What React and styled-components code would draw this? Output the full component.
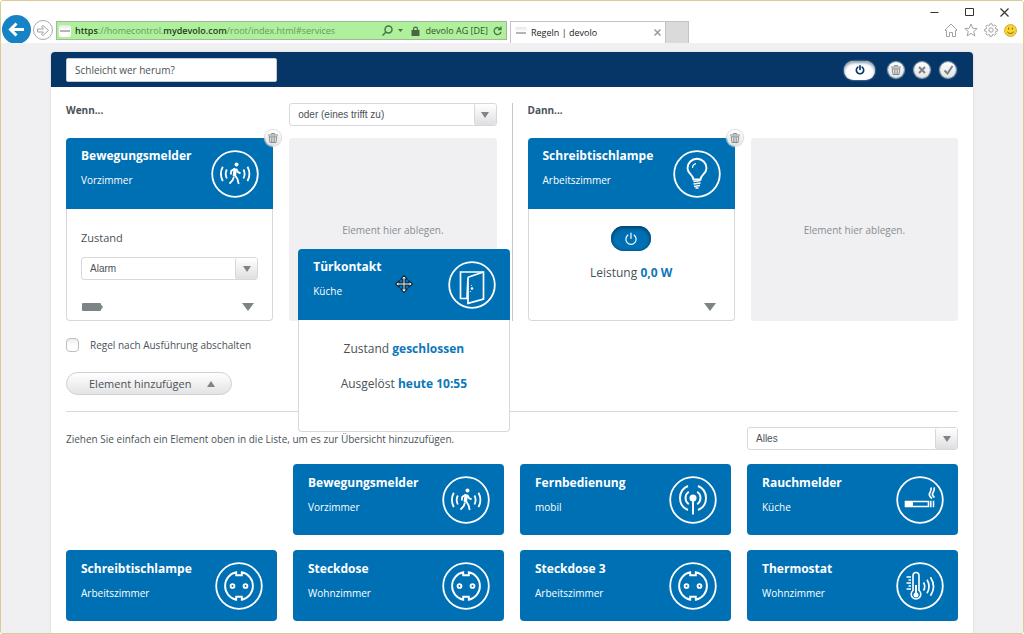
import React from "react";
import styled, { createGlobalStyle, css } from "styled-components";

const color = {
  blue: "#0070b4",
  link: "#0d77ba",
  navy: "#053667",
  text: "#4a5258",
  grey: "#7d8488",
  line: "#d8d8da",
  wash: "#f0f0f2",
  frame: "#d9cc94",
};

const GlobalStyle = createGlobalStyle`
  * { box-sizing: border-box; }
  body {
    margin: 0;
    background: #fff;
    color: ${color.text};
    font: 10px/18px "Open Sans", "Noto Sans", sans-serif;
  }
  button, input, select { font: inherit; color: inherit; margin: 0; padding: 0; }
  h1, h2, h3, p { margin: 0; font: inherit; }
  svg { display: block; flex: none; }
`;

/* ---------- browser frame ---------- */

const Window = styled.div`
  display: flex;
  flex-direction: column;
  min-height: 100vh;
  border: 1px solid ${color.frame};
  border-radius: 3px;
  overflow: hidden;
`;

const Chrome = styled.header`
  display: flex;
  justify-content: space-between;
  height: 42px;
  overflow: hidden;
  background: #fff;
`;

const NavRow = styled.div`
  display: flex;
  flex: 0 1 688px;
  align-items: flex-start;
  min-width: 0;
  padding-left: 1px;
`;

const BackButton = styled.button`
  display: grid;
  place-items: center;
  flex: none;
  width: 29px;
  height: 29px;
  margin-top: 14px;
  border: 0;
  border-radius: 50%;
  background: #1583c5;
`;

const ForwardButton = styled.button`
  display: grid;
  place-items: center;
  flex: none;
  width: 20px;
  height: 20px;
  margin: 19px 3px 0 2px;
  border: 1px solid #a9a9a9;
  border-radius: 50%;
  background: #fff;
`;

const AddressBar = styled.div`
  display: flex;
  flex: 1 1 451px;
  align-items: center;
  min-width: 0;
  height: 19px;
  margin-top: 20px;
  padding: 0 4px 0 2px;
  border: 1px solid #a0b79a;
  background: #aef09b;
  color: #33502c;
  font-size: 9px;
  white-space: nowrap;
`;

const Favicon = styled.span`
  display: grid;
  place-items: center;
  flex: none;
  width: 12px;
  height: 12px;
  margin-right: 4px;
  border-radius: 2px;
  background: linear-gradient(#e4e4e4, #fff 40%);
  &::after {
    content: "";
    width: 10px;
    height: 2px;
    background: #b5b5b5;
  }
`;

const Url = styled.span`
  flex: 1;
  overflow: hidden;
  color: #6b9761;
  b { color: #26391f; font-weight: 600; }
`;

const AddressTools = styled.span`
  display: flex;
  align-items: center;
  gap: 5px;
`;

const Tab = styled.div`
  display: flex;
  flex: 0 1 156px;
  align-items: center;
  height: 22px;
  margin: 20px 0 0 3px;
  padding: 0 4px;
  border: 1px solid #c3c3c3;
  border-bottom: 0;
  color: #222;
  font-size: 9px;
  white-space: nowrap;
  span:nth-child(2) { flex: 1; }
`;

const NewTab = styled.button`
  flex: none;
  width: 23px;
  height: 22px;
  margin-top: 20px;
  border: 1px solid #c3c3c3;
  border-left: 0;
  border-bottom: 0;
  background: #dadada;
`;

const FrameSide = styled.div`
  display: flex;
  flex-direction: column;
  align-items: flex-end;
  padding: 6px 6px 0 0;
`;

const FrameRow = styled.div`
  display: flex;
  align-items: center;
  gap: ${(p) => p.$gap}px;
  height: ${(p) => p.$height}px;
  padding-right: ${(p) => p.$end || 0}px;
`;

const PlainButton = styled.button`
  display: grid;
  place-items: center;
  border: 0;
  background: none;
`;

/* ---------- page ---------- */

const Page = styled.main`
  display: flex;
  flex: 1;
  flex-direction: column;
  padding: 9px 50px 0;
  background: ${color.wash};
`;

const Panel = styled.section`
  display: flex;
  flex: 1;
  flex-direction: column;
  border-radius: 4px 4px 0 0;
  background: #fff;
  box-shadow: 0 0 2px #c4c4c8;
`;

const Toolbar = styled.div`
  display: flex;
  align-items: center;
  gap: 10px;
  height: 35px;
  padding: 1px 17px 0 15px;
  border-radius: 4px 4px 0 0;
  background: ${color.navy};
`;

const RuleName = styled.input`
  width: 211px;
  height: 24px;
  padding: 0 8px;
  border: 1px solid #c9cdd3;
  border-radius: 2px;
  background: #fff;
`;

const Spacer = styled.span`
  flex: 1;
`;

const PowerSwitch = styled.button`
  display: grid;
  place-items: center;
  border: 0;
  ${(p) =>
    p.$on
      ? css`
          width: 40px;
          height: 25px;
          border-radius: 13px;
          background: ${color.blue};
          color: #fff;
          box-shadow: inset 0 2px 4px #04406c, inset 0 0 2px #04406c;
        `
      : css`
          width: 31px;
          height: 19px;
          margin-right: 3px;
          border-radius: 10px;
          background: #fff;
          color: ${color.navy};
          box-shadow: inset 0 2px 3px #8d99a8, 0 0 2px #c5d0dc;
        `}
`;

const RoundButton = styled.button`
  display: grid;
  place-items: center;
  width: 16px;
  height: 16px;
  border: 0;
  border-radius: 50%;
  background: linear-gradient(#fff, #e2e2e2);
  color: ${color.grey};
  box-shadow: 0 0 1px 1px ${(p) => (p.$badge ? "#d6d6d8" : "#9aa8b8")};
`;

const Content = styled.div`
  padding: 16px 15px 12px;
`;

const Rule = styled.div`
  display: grid;
  grid-template-columns: 1fr 1px 1fr;
  gap: 15px;
`;

const Divider = styled.span`
  background: #c4c6c8;
`;

const Side = styled.div`
  display: grid;
  grid-template-columns: 1fr 1fr;
  grid-template-rows: 23px 183px;
  gap: 12px 16px;
`;

const SideTitle = styled.h2`
  height: 14px;
  font-weight: 700;
  line-height: 14px;
`;

/* ---------- form parts ---------- */

const SelectFrame = styled.span`
  display: grid;
  width: ${(p) => p.$width || "100%"};
  height: 23px;
  border: 1px solid ${color.line};
  border-radius: 3px;
  background: #fff;
  > * { grid-area: 1 / 1; }
`;

const SelectBox = styled.select`
  width: 100%;
  padding-left: 8px;
  border: 0;
  background: none;
  appearance: none;
  font: 10px "Liberation Sans", sans-serif;
`;

const SelectArrow = styled.span`
  display: grid;
  place-items: center;
  justify-self: end;
  width: 22px;
  border-left: 1px solid ${color.line};
  border-radius: 2px;
  background: linear-gradient(#fff, #dfdfe1);
  pointer-events: none;
`;

const CheckLabel = styled.label`
  display: flex;
  align-items: center;
  gap: 11px;
  margin-top: 15px;
`;

const CheckBox = styled.input.attrs({ type: "checkbox" })`
  width: 13px;
  height: 14px;
  border: 1px solid #bcbec0;
  border-radius: 4px;
  background: linear-gradient(#ececec, #fff 60%);
  appearance: none;
`;

const AddButton = styled.button`
  display: inline-flex;
  align-items: center;
  justify-content: space-between;
  width: 166px;
  height: 23px;
  margin: 18px 0 16px;
  padding: 0 16px 0 22px;
  border: 1px solid #cfd0d2;
  border-radius: 12px;
  background: linear-gradient(#fff, #e3e3e4);
  font-size: 11px;
`;

const LibraryBar = styled.div`
  display: flex;
  align-items: center;
  justify-content: space-between;
  padding: 15px 0 14px;
  border-top: 1px solid ${color.line};
`;

const Library = styled.div`
  display: grid;
  grid-template-columns: repeat(4, 1fr);
  gap: 15px 16px;
`;

/* ---------- cards ---------- */

const CardHead = styled.div`
  display: flex;
  align-items: center;
  justify-content: space-between;
  height: 71px;
  padding: 0 14px 0 15px;
  border-radius: ${(p) => (p.$alone ? "4px" : "4px 4px 0 0")};
  background: ${color.blue};
  color: #fff;
`;

const CardText = styled.div`
  display: grid;
  align-self: flex-start;
  gap: 6px;
  padding-top: ${(p) => (p.$alone ? 10 : 9)}px;
`;

const CardTitle = styled.h3`
  font-size: 12px;
  font-weight: 700;
  white-space: nowrap;
`;

const Card = styled.article`
  position: relative;
  display: flex;
  flex-direction: column;
  height: 183px;
  color: ${color.text};
`;

const DraggedCard = styled(Card)`
  position: absolute;
  top: 111px;
  left: 9px;
  z-index: 2;
  width: calc(100% + 4px);
`;

const CardBody = styled.div`
  display: flex;
  flex: 1;
  flex-direction: column;
  align-items: ${(p) => (p.$center ? "center" : "stretch")};
  gap: ${(p) => p.$gap}px;
  padding: ${(p) => p.$top}px 14px 9px;
  border: 1px solid ${color.line};
  border-top: 0;
  border-radius: 0 0 4px 4px;
  background: #fff;
`;

const CardFoot = styled.div`
  display: flex;
  align-items: center;
  align-self: stretch;
  justify-content: ${(p) => (p.$end ? "flex-end" : "space-between")};
  margin-top: auto;
  padding-right: 4px;
  color: ${color.grey};
`;

const Reading = styled.p`
  font-size: 12px;
  b { color: ${color.link}; font-weight: 700; }
`;

const FieldLabel = styled.label`
  font-size: 11px;
`;

const Slot = styled.div`
  position: relative;
  display: grid;
  place-items: center;
  border-radius: 3px;
  background: ${color.wash};
  color: #888e92;
`;

const Badge = styled.div`
  position: absolute;
  top: -8px;
  right: -8px;
`;

const DragPointer = styled.div`
  position: absolute;
  top: 26px;
  left: 97px;
`;

/* ---------- drawings ---------- */

const Caret = ({ w = 9, h = 6, up }) => (
  <svg width={w} height={h} viewBox="0 0 10 6" preserveAspectRatio="none" fill={color.grey}>
    <path d={up ? "M0 6 5 0l5 6z" : "M0 0h10L5 6z"} />
  </svg>
);

const TrashIcon = () => (
  <svg width="12" height="12" viewBox="0 0 12 12" fill="none" stroke="currentColor">
    <path d="M1 3h10M4.500 2.500v-1h3v1M2.200 4.500l.8 6h6l.8-6M2 4.800h8" strokeWidth=".9" />
    <path d="M4.300 5l.3 5M6 5v5M7.700 5l-.3 5" strokeWidth=".7" />
  </svg>
);

const PowerIcon = ({ size, weight }) => (
  <svg width={size} height={size} viewBox="0 0 12 12" fill="none" stroke="currentColor" strokeWidth={weight} strokeLinecap="round">
    <path d="M6 1v4.500M3.400 2.600a4.400 4.400 0 1 0 5.200 0" />
  </svg>
);

const glyphs = {
  motion: (
    <>
      <circle cx="25.500" cy="14.500" r="2" fill="#fff" stroke="none" />
      <path d="M24.300 18.500l-1 7.500" strokeWidth="3.400" />
      <path d="M24 18.500l-3.700 2.400-.6 3.600M25.300 18.800l1.600 3.200 2.600 1.400M24.200 25.500l2.300 3.500 1.200 5M23 26.500l-1.300 3.600-3.200 3.600" strokeWidth="1.800" />
      <path d="M15.800 19.500q-2.200 4.200 0 9M11.800 16.800q-3.800 7 0 14.400M32.500 19.500q2.200 4.200 0 9M36.500 16.800q3.800 7 0 14.400" strokeWidth="1.800" />
    </>
  ),
  bulb: (
    <>
      <path d="M20.500 29.500c0-4.500-6-6-6-11.300a9.500 9.500 0 0 1 19 0c0 5.300-6 6.800-6 11.300z" />
      <path d="M19.500 18a4.500 4.500 0 0 1 3.500-4.300" strokeWidth="1.200" />
      <path d="M20.500 31.500l7-1M20.500 34l7-1M21 36.500l6-1M22.500 38h3" strokeWidth="1.500" />
    </>
  ),
  door: (
    <>
      <path d="M19 37.500h-6.500V11h23v27l-15.500 4.300V16.300z" strokeWidth="1.700" />
      <path d="M20 16.300L35.500 11" strokeWidth="1.700" />
      <circle cx="24" cy="27.500" r="1.300" fill="#fff" stroke="none" />
      <path d="M23.500 24v.8M22.500 30v.8" strokeWidth="1.200" />
    </>
  ),
  remote: (
    <>
      <circle cx="24" cy="22" r="3.500" fill="#fff" stroke="none" />
      <path d="M24 24v14.500" strokeWidth="1.900" />
      <path d="M19.800 28.200a7.500 7.500 0 0 1 0-12.400M28.200 28.200a7.500 7.500 0 0 0 0-12.400M19 34a13 13 0 0 1 0-24M29 34a13 13 0 0 0 0-24" strokeWidth="1.900" />
    </>
  ),
  socket: (
    <>
      <path d="M21.200 10.300v3h5.600v-3a14 14 0 0 1 0 27.400v-3h-5.600v3a14 14 0 0 1 0-27.400z" />
      <circle cx="17.500" cy="24" r="1.900" />
      <circle cx="30.500" cy="24" r="1.900" />
    </>
  ),
  smoke: (
    <>
      <path d="M9.500 25.500h23v5h-23z" strokeWidth="1.600" />
      <path d="M9 25h8v6H9z" fill="#fff" stroke="none" />
      <path d="M34.800 24.700v6.600M37.500 24.700v6.600" strokeWidth="1.500" />
      <path d="M36 22.500q-4-3.200-2-6 1.500-2 1-5M38.500 21.500q-3.300-2.600-1.300-5.200 1.500-2 1-5" strokeWidth="1.700" />
    </>
  ),
  thermo: (
    <>
      <path d="M17 28.500V13.500a3 3 0 0 1 6 0v15a4.800 4.800 0 1 1-6 0z" strokeWidth="1.600" />
      <circle cx="20" cy="33" r="2.500" fill="#fff" stroke="none" />
      <path d="M20 32v-9" strokeWidth="2" />
      <path d="M10.500 15h4.500M12.500 18h2.500M10.500 21h4.500M12.500 24h2.500M10.500 27h4.500" strokeWidth="1.600" />
      <path d="M27.500 20.500q2.500 4 0 8M31 17.800q4.200 6.700 0 13.400M34.500 15.200q6 9.300 0 18.600" strokeWidth="1.700" />
    </>
  ),
};

const DeviceIcon = ({ kind }) => (
  <svg width="48" height="48" viewBox="0 0 48 48" fill="none" stroke="#fff" strokeWidth="1.900" aria-hidden="true">
    <circle cx="24" cy="24" r="22.800" strokeWidth="1.800" />
    {glyphs[kind]}
  </svg>
);

const BatteryIcon = () => (
  <svg width="22" height="8" viewBox="0 0 22 8" fill={color.grey}>
    <rect x="1" width="19" height="8" rx="1" />
    <path d="M20 1.500l2 2.500-2 2.500z" />
  </svg>
);

const MovePointer = () => (
  <svg width="18" height="18" viewBox="0 0 18 18">
    <path
      d="M9 .5l3 3.500h-2v4h4V6l3.500 3-3.500 3v-2h-4v4h2l-3 3.500L6 14h2v-4H4v2L.5 9 4 6v2h4V4H6z"
      fill="#fff"
      stroke="#0d2230"
      strokeWidth="1.100"
    />
  </svg>
);

/* ---------- composed parts ---------- */

const Head = ({ title, room, icon, alone }) => (
  <CardHead $alone={alone}>
    <CardText $alone={alone}>
      <CardTitle>{title}</CardTitle>
      <p>{room}</p>
    </CardText>
    <DeviceIcon kind={icon} />
  </CardHead>
);

const Select = ({ id, label, value, width }) => (
  <SelectFrame $width={width}>
    <SelectBox id={id} aria-label={label} defaultValue={value}>
      <option>{value}</option>
    </SelectBox>
    <SelectArrow>
      <Caret w={8} h={6} />
    </SelectArrow>
  </SelectFrame>
);

const DeleteBadge = () => (
  <Badge>
    <RoundButton $badge aria-label="Löschen">
      <TrashIcon />
    </RoundButton>
  </Badge>
);

const BrowserChrome = () => (
  <Chrome>
    <NavRow>
      <BackButton aria-label="Zurück">
        <svg width="17" height="15" viewBox="0 0 17 15" fill="none" stroke="#fff" strokeWidth="3">
          <path d="M16 7.500H3M8.500 1.500l-6 6 6 6" />
        </svg>
      </BackButton>
      <ForwardButton aria-label="Vorwärts">
        <svg width="12" height="11" viewBox="0 0 12 11" fill="none" stroke="#a0a0a0">
          <path d="M.5 4h6L4.500 1.500 6 .5l5.500 5L6 10.500l-1.500-1 2-2.500h-6z" />
        </svg>
      </ForwardButton>
      <AddressBar>
        <Favicon />
        <Url>
          <b>https</b>://homecontrol.<b>mydevolo.com</b>/root/index.html#services
        </Url>
        <AddressTools>
          <svg width="11" height="11" viewBox="0 0 11 11" fill="none" stroke="#4b7443" strokeWidth="1.500">
            <circle cx="6.500" cy="4.500" r="3.500" />
            <path d="M4 7l-3.500 3.500" />
          </svg>
          <svg width="5" height="3" viewBox="0 0 5 3" fill="#4b7443">
            <path d="M0 0h5L2.500 3z" />
          </svg>
          <svg width="13" height="10" viewBox="0 0 13 10" fill="#4b6544">
            <path d="M4 4h1V3a2.500 2.500 0 0 1 5 0v1h1.500v6h-8V4zM6.200 4h2.600V3a1.300 1.300 0 0 0-2.600 0z" />
          </svg>
          devolo AG [DE]
          <svg width="9" height="10" viewBox="0 0 9 10" fill="none" stroke="#4b7443" strokeWidth="1.300">
            <path d="M7.500 3A3.500 3.500 0 1 0 8 6M8 .5v3H5" />
          </svg>
        </AddressTools>
      </AddressBar>
      <Tab>
        <Favicon />
        <span>Regeln | devolo</span>
        <PlainButton aria-label="Tab schließen">
          <svg width="7" height="7" viewBox="0 0 7 7" stroke="#999" strokeWidth="1.500">
            <path d="M.5.5l6 6M6.500.5l-6 6" />
          </svg>
        </PlainButton>
      </Tab>
      <NewTab aria-label="Neuer Tab" />
    </NavRow>
    <FrameSide>
      <FrameRow $gap={26} $height={10} $end={8}>
        <PlainButton aria-label="Minimieren">
          <svg width="9" height="9" viewBox="0 0 9 9" stroke="#333">
            <path d="M.5 4.500h8" />
          </svg>
        </PlainButton>
        <PlainButton aria-label="Maximieren">
          <svg width="9" height="9" viewBox="0 0 9 9" fill="none" stroke="#333">
            <path d="M.5.5h8v7h-8z" />
          </svg>
        </PlainButton>
        <PlainButton aria-label="Schließen">
          <svg width="9" height="9" viewBox="0 0 9 9" stroke="#333" strokeWidth="1.200">
            <path d="M.5.5l8 8M8.500.5l-8 8" />
          </svg>
        </PlainButton>
      </FrameRow>
      <FrameRow $gap={6} $height={26}>
        <PlainButton aria-label="Startseite">
          <svg width="14" height="14" viewBox="0 0 14 14" fill="none" stroke="#a3a3a3">
            <path d="M1 7l6-6 6 6-1 1-.5-.5v6H8.500v-4h-3v4h-3v-6L2 8z" />
          </svg>
        </PlainButton>
        <PlainButton aria-label="Favoriten">
          <svg width="14" height="14" viewBox="0 0 14 14" fill="none" stroke="#a3a3a3">
            <path d="M7 1l1.700 4.300 4.500.2-3.500 2.900 1.200 4.500L7 10.400l-3.900 2.500 1.200-4.500L.8 5.500l4.500-.2z" />
          </svg>
        </PlainButton>
        <PlainButton aria-label="Extras">
          <svg width="14" height="14" viewBox="0 0 14 14" fill="none" stroke="#a3a3a3">
            <circle cx="7" cy="7" r="2.200" />
            <path d="M5.900.8h2.200l.3 1.700 1 .4 1.400-1 1.500 1.500-1 1.400.4 1 1.700.3v2l-1.700.3-.4 1 1 1.400-1.500 1.500-1.400-1-1 .4-.3 1.600H5.900l-.3-1.600-1-.4-1.400 1-1.500-1.500 1-1.400-.4-1L.7 8.100v-2l1.600-.3.4-1-1-1.400 1.500-1.500 1.400 1 1-.4z" />
          </svg>
        </PlainButton>
        <PlainButton aria-label="Feedback">
          <svg width="13" height="13" viewBox="0 0 12 12">
            <circle cx="6" cy="6" r="5.500" fill="#fbd534" stroke="#c9a227" strokeWidth=".8" />
            <path d="M4.300 3.200v2M7.700 3.200v2M3 7.300q3 3 6 0" fill="none" stroke="#6b5210" strokeWidth=".8" />
          </svg>
        </PlainButton>
      </FrameRow>
    </FrameSide>
  </Chrome>
);

const library = [
  { title: "Bewegungsmelder", room: "Vorzimmer", icon: "motion" },
  { title: "Fernbedienung", room: "mobil", icon: "remote" },
  { title: "Rauchmelder", room: "Küche", icon: "smoke" },
  { title: "Schreibtischlampe", room: "Arbeitszimmer", icon: "socket" },
  { title: "Steckdose", room: "Wohnzimmer", icon: "socket" },
  { title: "Steckdose 3", room: "Arbeitszimmer", icon: "socket" },
  { title: "Thermostat", room: "Wohnzimmer", icon: "thermo" },
];

export default function App() {
  return (
    <Window>
      <GlobalStyle />
      <BrowserChrome />
      <Page>
        <Panel>
          <Toolbar>
            <RuleName aria-label="Name der Regel" defaultValue="Schleicht wer herum?" />
            <Spacer />
            <PowerSwitch aria-label="Regel aktiv">
              <PowerIcon size={10} weight={2} />
            </PowerSwitch>
            <RoundButton aria-label="Löschen">
              <TrashIcon />
            </RoundButton>
            <RoundButton aria-label="Abbrechen">
              <svg width="8" height="8" viewBox="0 0 8 8" stroke="currentColor" strokeWidth="2">
                <path d="M1 1l6 6M7 1L1 7" />
              </svg>
            </RoundButton>
            <RoundButton aria-label="Speichern">
              <svg width="11" height="10" viewBox="0 0 11 10" fill="none" stroke="currentColor" strokeWidth="2">
                <path d="M1.500 5.500L4.500 8.500l5-7.500" />
              </svg>
            </RoundButton>
          </Toolbar>

          <Content>
            <Rule>
              <Side>
                <SideTitle>Wenn...</SideTitle>
                <Select label="Verknüpfung" value="oder (eines trifft zu)" />
                <Card>
                  <Head title="Bewegungsmelder" room="Vorzimmer" icon="motion" />
                  <CardBody $top={20} $gap={10}>
                    <FieldLabel htmlFor="zustand">Zustand</FieldLabel>
                    <Select id="zustand" value="Alarm" />
                    <CardFoot>
                      <BatteryIcon />
                      <Caret w={12} h={8} />
                    </CardFoot>
                  </CardBody>
                  <DeleteBadge />
                </Card>
                <Slot>
                  Element hier ablegen.
                  <DraggedCard>
                    <Head title="Türkontakt" room="Küche" icon="door" />
                    <CardBody $center $top={20} $gap={17}>
                      <Reading>
                        Zustand <b>geschlossen</b>
                      </Reading>
                      <Reading>
                        Ausgelöst <b>heute 10:55</b>
                      </Reading>
                    </CardBody>
                    <DragPointer>
                      <MovePointer />
                    </DragPointer>
                  </DraggedCard>
                </Slot>
              </Side>
              <Divider />
              <Side>
                <SideTitle>Dann...</SideTitle>
                <span />
                <Card>
                  <Head title="Schreibtischlampe" room="Arbeitszimmer" icon="bulb" />
                  <CardBody $center $top={17} $gap={13}>
                    <PowerSwitch $on aria-label="Lampe schalten">
                      <PowerIcon size={14} weight={1} />
                    </PowerSwitch>
                    <Reading>
                      Leistung <b>0,0 W</b>
                    </Reading>
                    <CardFoot $end>
                      <Caret w={12} h={8} />
                    </CardFoot>
                  </CardBody>
                  <DeleteBadge />
                </Card>
                <Slot>Element hier ablegen.</Slot>
              </Side>
            </Rule>

            <CheckLabel>
              <CheckBox />
              Regel nach Ausführung abschalten
            </CheckLabel>
            <AddButton>
              Element hinzufügen
              <Caret w={8} h={6} up />
            </AddButton>

            <LibraryBar>
              <p>Ziehen Sie einfach ein Element oben in die Liste, um es zur Übersicht hinzuzufügen.</p>
              <Select label="Filter" value="Alles" width="211px" />
            </LibraryBar>
            <Library>
              <span />
              {library.map((d) => (
                <Head key={d.title} {...d} alone />
              ))}
            </Library>
          </Content>
        </Panel>
      </Page>
    </Window>
  );
}
